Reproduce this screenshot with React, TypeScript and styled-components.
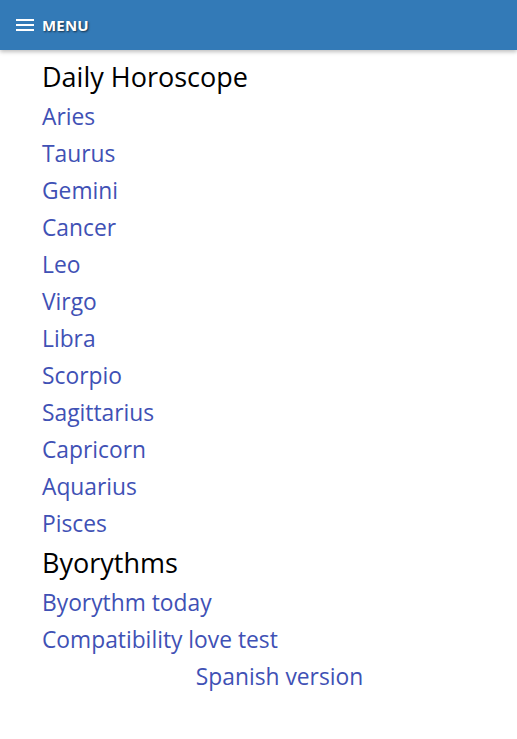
import React from "react";
import styled, { createGlobalStyle } from "styled-components";

const GlobalStyle = createGlobalStyle`
  body {
    margin: 0;
    background: #ffffff;
    font-family: "Open Sans", "Noto Sans", sans-serif;
  }
`;

const TopBar = styled.header`
  height: 50px;
  background: #337ab7;
  display: flex;
  align-items: center;
  padding-left: 16px;
  box-shadow: 0 2px 4px rgba(0, 0, 0, 0.25);
`;

const MenuButton = styled.div`
  display: flex;
  align-items: center;
  gap: 8px;
  color: #ffffff;
  font-weight: 700;
  font-size: 15px;
  text-shadow: 1px 1px 2px rgba(0, 0, 0, 0.6);
  letter-spacing: 0.2px;
`;

const Content = styled.main`
  padding: 6px 0 0 42px;
`;

const SectionTitle = styled.h2`
  margin: 0;
  font-size: 27px;
  font-weight: 400;
  color: #000000;
  line-height: 42px;
`;

const NavList = styled.nav`
  display: flex;
  flex-direction: column;
`;

const NavLink = styled.a<{ $center?: boolean }>`
  display: block;
  color: #3f51b5;
  text-decoration: none;
  font-size: 22.8px;
  line-height: 37px;
  text-align: ${(p) => (p.$center ? "center" : "left")};
`;

const signs = [
  "Aries",
  "Taurus",
  "Gemini",
  "Cancer",
  "Leo",
  "Virgo",
  "Libra",
  "Scorpio",
  "Sagittarius",
  "Capricorn",
  "Aquarius",
  "Pisces",
];

function Hamburger() {
  return (
    <svg width="18" height="14" viewBox="0 0 18 14">
      <rect x="0" y="1" width="18" height="2" fill="#fff" />
      <rect x="0" y="6" width="18" height="2" fill="#fff" />
      <rect x="0" y="11" width="18" height="2" fill="#fff" />
    </svg>
  );
}

export default function App() {
  return (
    <>
      <GlobalStyle />
      <TopBar>
        <MenuButton>
          <Hamburger />
          MENU
        </MenuButton>
      </TopBar>
      <Content>
        <SectionTitle>Daily Horoscope</SectionTitle>
        <NavList>
          {signs.map((s) => (
            <NavLink key={s} href="#">
              {s}
            </NavLink>
          ))}
        </NavList>
        <SectionTitle>Byorythms</SectionTitle>
        <NavList>
          <NavLink href="#">Byorythm today</NavLink>
          <NavLink href="#">Compatibility love test</NavLink>
          <NavLink href="#" $center>
            Spanish version
          </NavLink>
        </NavList>
      </Content>
    </>
  );
}
